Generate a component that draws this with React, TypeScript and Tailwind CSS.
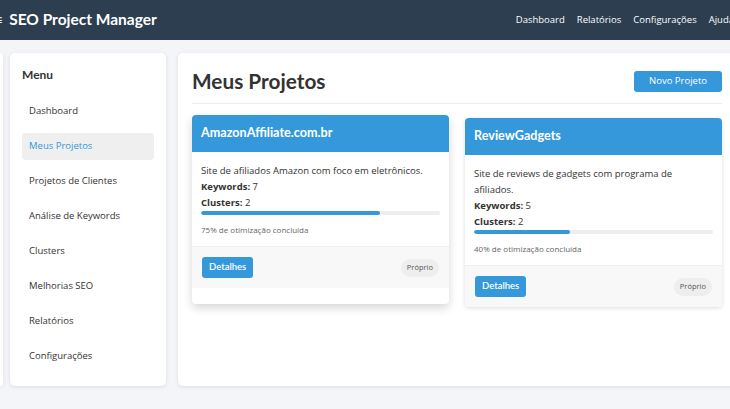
import { useState } from "react";

type Project = {
  name: string;
  description: string;
  keywords: number;
  clusters: number;
  progress: number;
  hovered?: boolean;
};

const projects: Project[] = [
  {
    name: "AmazonAffiliate.com.br",
    description: "Site de afiliados Amazon com foco em eletrônicos.",
    keywords: 7,
    clusters: 2,
    progress: 75,
    hovered: true,
  },
  {
    name: "ReviewGadgets",
    description: "Site de reviews de gadgets com programa de afiliados.",
    keywords: 5,
    clusters: 2,
    progress: 40,
  },
];

const menuItems = [
  "Dashboard",
  "Meus Projetos",
  "Projetos de Clientes",
  "Análise de Keywords",
  "Clusters",
  "Melhorias SEO",
  "Relatórios",
  "Configurações",
];

const navLinks = ["Dashboard", "Relatórios", "Configurações", "Ajuda"];

const heading = "font-['Lato',_'Open_Sans',_sans-serif]";

function ProjectCard({ project }: { project: Project }) {
  return (
    <div
      className={`flex flex-col bg-white rounded-[4px] overflow-hidden ${
        project.hovered
          ? "-translate-y-[3px] shadow-[0_4px_10px_rgba(0,0,0,0.16)]"
          : "shadow-[0_1px_4px_rgba(0,0,0,0.14)]"
      }`}
    >
      {/* cabeçalho */}
      <div className="bg-[#3498db] px-[9px] h-[37px] flex items-center">
        <h3 className={`${heading} text-white font-bold text-[12.6px]`}>{project.name}</h3>
      </div>

      {/* corpo */}
      <div className="px-[9px] pt-[11px] pb-[10px] text-[9.5px] leading-[16px] text-[#333]">
        <p>{project.description}</p>
        <p>
          <span className="font-bold">Keywords:</span> {project.keywords}
        </p>
        <p>
          <span className="font-bold">Clusters:</span> {project.clusters}
        </p>
        <div className="h-[4px] bg-[#eeeeee] rounded-full overflow-hidden">
          <div className="h-full bg-[#3498db] rounded-full" style={{ width: `${project.progress}%` }} />
        </div>
        <p className="mt-[9px] text-[8px] leading-[12px] text-[#666]">
          {project.progress}% de otimização concluída
        </p>
      </div>

      {/* rodapé */}
      <div className="border-t border-[#eeeeee] bg-[#f8f8f8] p-[10px] flex items-center justify-between">
        <button className={`${heading} bg-[#3498db] text-white text-[9.5px] font-semibold h-[21px] px-[7px] rounded-[3px]`}>
          Detalhes
        </button>
        <span className="bg-[#eeeeee] text-[#555] text-[7.5px] h-[18px] px-[6px] rounded-full flex items-center">
          Próprio
        </span>
      </div>
    </div>
  );
}

export default function App() {
  const [active] = useState("Meus Projetos");

  return (
    <div
      className="w-[730px] h-[409px] overflow-hidden bg-[#f4f5f9]"
      style={{ fontFamily: '"Open Sans", "Noto Sans", sans-serif' }}
    >
      <div className="w-[746px]">
        {/* topo */}
        <header className="h-[40px] bg-[#2c3e50] flex items-center justify-between pr-[12px]">
          <div className="flex items-center">
            <span className="text-white text-[14px] -ml-[6px] mr-[7px] leading-none">≡</span>
            <h1 className={`${heading} text-white font-bold text-[15.5px]`}>SEO Project Manager</h1>
          </div>
          <nav className="flex gap-[12px] text-[9.5px] text-white">
            {navLinks.map((link) => (
              <span key={link}>{link}</span>
            ))}
          </nav>
        </header>

        <div className="flex pt-[13px] pr-[10px]">
          <div className="w-[3px] h-[333px] bg-white rounded-r-[4px] shadow-[0_1px_4px_rgba(0,0,0,0.1)]" />

          {/* menu lateral */}
          <aside className="ml-[7px] w-[156px] h-[333px] bg-white rounded-[5px] shadow-[0_1px_4px_rgba(0,0,0,0.1)] px-[12px] pt-[13px]">
            <h2 className={`${heading} font-bold text-[12px] leading-[18px] text-[#333] mb-[14px]`}>Menu</h2>
            <ul className="flex flex-col gap-[8px]">
              {menuItems.map((item) => (
                <li
                  key={item}
                  className={`h-[27px] px-[7px] flex items-center rounded-[4px] text-[9.5px] ${
                    item === active ? "bg-[#efefef] text-[#3498db]" : "text-[#333]"
                  }`}
                >
                  {item}
                </li>
              ))}
            </ul>
          </aside>

          {/* conteúdo */}
          <main className="ml-[12px] flex-1 h-[333px] bg-white rounded-[5px] shadow-[0_1px_4px_rgba(0,0,0,0.1)] px-[14px] pt-[14px]">
            <div className="flex items-center justify-between pb-[8px] border-b border-[#eeeeee]">
              <h1 className={`${heading} font-bold text-[20.8px] leading-[28px] text-[#333]`}>Meus Projetos</h1>
              <button className="bg-[#3498db] text-white text-[9.5px] h-[21px] px-[15px] rounded-[3px]">
                Novo Projeto
              </button>
            </div>
            <div className="grid grid-cols-2 gap-[16px] mt-[14px]">
              {projects.map((p) => (
                <ProjectCard key={p.name} project={p} />
              ))}
            </div>
          </main>
        </div>
      </div>
    </div>
  );
}
